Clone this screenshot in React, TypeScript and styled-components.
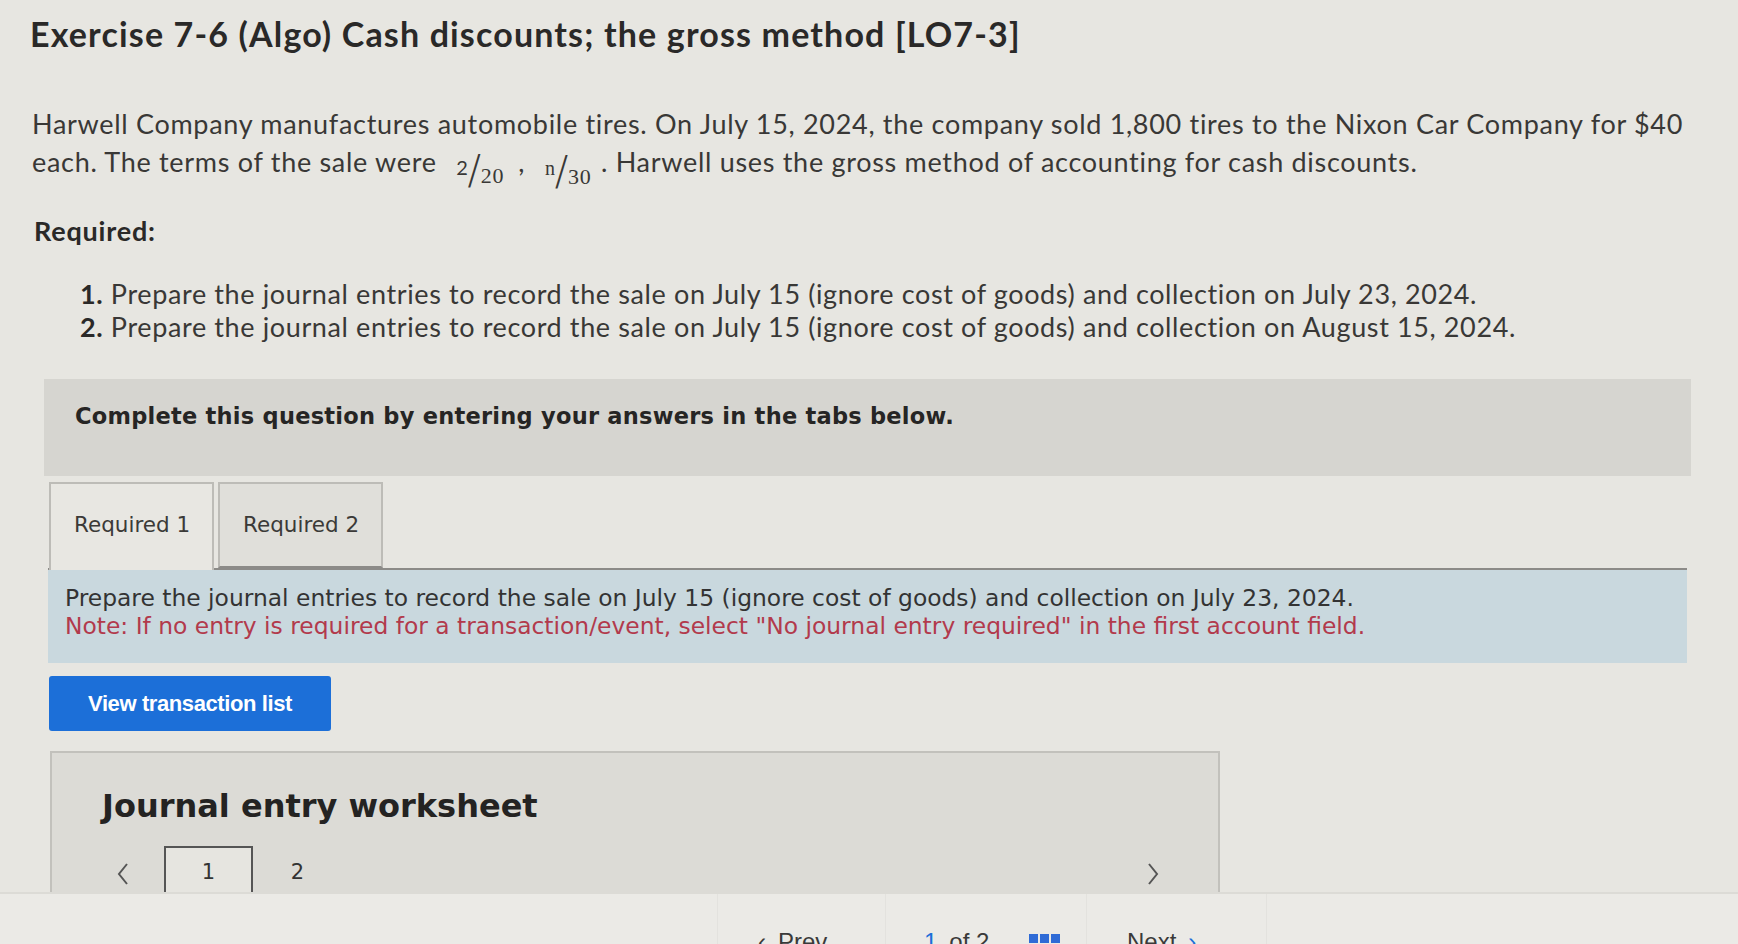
import React, { useState } from 'react'
import styled, { createGlobalStyle } from 'styled-components'

const GlobalStyle = createGlobalStyle`
  html, body {
    margin: 0;
    padding: 0;
    background: #e7e6e1;
  }
  body {
    font-family: Lato, "Liberation Sans", sans-serif;
    color: #2b2a29;
    overflow: hidden;
  }
`

const App = () => {
  const [tab, setTab] = useState(1)

  return (
    <>
      <GlobalStyle />
      <Screen>
        <Scroll>
          <Title>Exercise 7-6 (Algo) Cash discounts; the gross method [LO7-3]</Title>
          <Intro>
            Harwell Company manufactures automobile tires. On July 15, 2024, the company sold 1,800 tires to the Nixon Car Company for $40
            <br />
            each. The terms of the sale were{' '}
            <Frac><Num>2</Num><Slash>/</Slash><Den>20</Den></Frac>
            <Comma>,</Comma>
            <Frac><Num $serif>n</Num><Slash>/</Slash><Den>30</Den></Frac>
            {' '}. Harwell uses the gross method of accounting for cash discounts.
          </Intro>
          <RequiredHead>Required:</RequiredHead>
          <ReqList>
            <li><b>1.</b> Prepare the journal entries to record the sale on July 15 (ignore cost of goods) and collection on July 23, 2024.</li>
            <li><b>2.</b> Prepare the journal entries to record the sale on July 15 (ignore cost of goods) and collection on August 15, 2024.</li>
          </ReqList>

          <Banner>Complete this question by entering your answers in the tabs below.</Banner>

          <Tabs>
            <Tab $active={tab === 1} onClick={() => setTab(1)}>Required 1</Tab>
            <Tab $active={tab === 2} onClick={() => setTab(2)}>Required 2</Tab>
          </Tabs>
          <Instructions>
            Prepare the journal entries to record the sale on July 15 (ignore cost of goods) and collection on July 23, 2024.
            <Note>Note: If no entry is required for a transaction/event, select "No journal entry required" in the first account field.</Note>
          </Instructions>

          <BlueButton>View transaction list</BlueButton>

          <Worksheet>
            <WorksheetTitle>Journal entry worksheet</WorksheetTitle>
            <Pager>
              <Arrow viewBox="0 0 14 24"><path d="M11 2 L3 12 L11 22" /></Arrow>
              <PageBox $current>1</PageBox>
              <PageBox>2</PageBox>
              <PagerSpacer />
              <Arrow viewBox="0 0 14 24"><path d="M3 2 L11 12 L3 22" /></Arrow>
            </Pager>
          </Worksheet>
        </Scroll>

        <Footer>
          <FooterCell $w={718} />
          <FooterCell $w={168} $pad={40}>
            <NavText>‹</NavText>
            <NavText>Prev</NavText>
          </FooterCell>
          <FooterCell $w={201} $pad={38}>
            <NavNum>1</NavNum>
            <NavText>of 2</NavText>
            <Dots>
              <i /><i /><i />
            </Dots>
          </FooterCell>
          <FooterCell $w={180} $pad={40}>
            <NavText>Next</NavText>
            <NavNum>›</NavNum>
          </FooterCell>
        </Footer>
      </Screen>
    </>
  )
}

export default App

const Screen = styled.div`
  width: 1738px;
  height: 944px;
  display: flex;
  flex-direction: column;
  overflow: hidden;
`

const Scroll = styled.div`
  flex: 0 0 892px;
  height: 892px;
  overflow: hidden;
  padding: 14px 0 0 30px;
  box-sizing: border-box;
`

const Title = styled.h1`
  margin: 0;
  font-family: Lato, sans-serif;
  font-weight: 700;
  font-size: 34px;
  line-height: 40px;
  color: #2a2928;
  letter-spacing: 1.15px;
`

const Intro = styled.p`
  margin: 51px 0 0 2px;
  font-size: 27px;
  line-height: 38px;
  color: #393836;
  letter-spacing: 0.7px;
  white-space: nowrap;
`

const Frac = styled.span`
  display: inline-flex;
  align-items: center;
  margin: 0 2px 0 12px;
  vertical-align: -3px;
`

const Num = styled.span<{ $serif?: boolean }>`
  font-family: ${p => (p.$serif ? '"Liberation Serif", serif' : 'Lato, sans-serif')};
  font-size: 20px;
  align-self: flex-start;
  margin-top: -6px;
`

const Slash = styled.span`
  font-family: "DejaVu Sans", sans-serif;
  font-weight: 300;
  font-size: 40px;
  line-height: 32px;
  margin: 0 -1px;
`

const Den = styled.span`
  font-family: "Liberation Serif", serif;
  font-size: 22px;
  align-self: flex-end;
  margin-bottom: -9px;
`

const Comma = styled.span`
  margin: 0 8px 0 12px;
`

const RequiredHead = styled.div`
  margin: 26px 0 0 4px;
  font-weight: 700;
  font-size: 27px;
  line-height: 36px;
  color: #2a2928;
  letter-spacing: 0.8px;
`

const ReqList = styled.ol`
  list-style: none;
  margin: 28px 0 0 0;
  padding: 0 0 0 50px;
  font-size: 27px;
  line-height: 33px;
  color: #393836;
  letter-spacing: 0.62px;
  white-space: nowrap;

  b {
    font-weight: 700;
    color: #2a2928;
  }
`

const Banner = styled.div`
  margin: 36px 0 0 14px;
  width: 1647px;
  height: 97px;
  box-sizing: border-box;
  padding: 23px 0 0 31px;
  background: #d6d5d0;
  font-family: "DejaVu Sans", Verdana, sans-serif;
  font-weight: 700;
  font-size: 22.5px;
  line-height: 28px;
  letter-spacing: 0.25px;
  color: #262524;
`

const Tabs = styled.div`
  display: flex;
  gap: 4px;
  margin: 6px 0 0 19px;
  position: relative;
  z-index: 1;
`

const Tab = styled.div<{ $active?: boolean }>`
  width: 165px;
  height: ${p => (p.$active ? 88 : 86)}px;
  margin-bottom: ${p => (p.$active ? -2 : 0)}px;
  box-sizing: border-box;
  padding: 28px 0 0 23px;
  border: 2px solid #bdbcb7;
  border-bottom: ${p => (p.$active ? 'none' : '2px solid #8c8b88')};
  background: ${p => (p.$active ? '#e8e7e2' : '#e0dfda')};
  font-family: "DejaVu Sans", Verdana, sans-serif;
  font-size: 21.5px;
  line-height: 26px;
  color: #3b3a38;
  cursor: pointer;
`

const Instructions = styled.div`
  margin: 0 0 0 18px;
  width: 1639px;
  height: 95px;
  box-sizing: border-box;
  border-top: 2px solid #8c8b88;
  padding: 15px 0 0 17px;
  background: #c9d8de;
  font-family: "DejaVu Sans", Verdana, sans-serif;
  font-size: 23.4px;
  line-height: 27.5px;
  color: #333;
  white-space: nowrap;
`

const Note = styled.div`
  color: #b23a4c;
`

const BlueButton = styled.button`
  display: block;
  margin: 13px 0 0 19px;
  width: 282px;
  height: 55px;
  border: none;
  border-radius: 3px;
  background: #1c6fd8;
  color: #fff;
  font-family: "Liberation Sans", Arial, sans-serif;
  font-weight: 700;
  font-size: 22px;
  letter-spacing: -0.4px;
  text-align: center;
  cursor: pointer;
`

const Worksheet = styled.div`
  margin: 20px 0 0 20px;
  width: 1170px;
  height: 180px;
  box-sizing: border-box;
  border: 2px solid #c2c1bc;
  background: #dcdbd6;
  padding: 33px 0 0 50px;
`

const WorksheetTitle = styled.div`
  font-family: "DejaVu Sans", Verdana, sans-serif;
  font-weight: 700;
  font-size: 32px;
  line-height: 40px;
  color: #242322;
`

const Pager = styled.div`
  display: flex;
  align-items: flex-start;
  margin-top: 20px;
  padding-left: 14px;
  padding-right: 58px;
`

const Arrow = styled.svg`
  width: 14px;
  height: 24px;
  margin-top: 16px;
  fill: none;
  stroke: #555;
  stroke-width: 2;
`

const PageBox = styled.div<{ $current?: boolean }>`
  width: 89px;
  height: 48px;
  box-sizing: border-box;
  margin-left: ${p => (p.$current ? 34 : 0)}px;
  padding-top: 11px;
  text-align: center;
  border: ${p => (p.$current ? '2px solid #555' : '2px solid transparent')};
  border-bottom: none;
  background: ${p => (p.$current ? '#e6e5e0' : 'transparent')};
  font-family: "DejaVu Sans", Verdana, sans-serif;
  font-size: 21px;
  line-height: 26px;
  color: #333;
`

const PagerSpacer = styled.div`
  flex: 1;
`

const Footer = styled.div`
  flex: 1 1 auto;
  min-height: 0;
  overflow: hidden;
  display: flex;
  background: #ebeae6;
  border-top: 2px solid #dcdbd6;
`

const FooterCell = styled.div<{ $w: number; $pad?: number }>`
  width: ${p => p.$w}px;
  flex-shrink: 0;
  display: flex;
  align-items: flex-start;
  gap: 12px;
  padding: 34px 0 0 ${p => p.$pad ?? 30}px;
  box-sizing: border-box;
  border-right: 1px solid #e3e2de;
`

const NavText = styled.span`
  font-family: "Liberation Sans", Arial, sans-serif;
  font-size: 24px;
  line-height: 28px;
  color: #3a3a3a;
`

const NavNum = styled(NavText)`
  color: #1c6fd8;
`

const Dots = styled.span`
  display: flex;
  gap: 2px;
  margin: 6px 0 0 28px;

  i {
    display: block;
    width: 9px;
    height: 9px;
    background: #2f6bd6;
  }
`
